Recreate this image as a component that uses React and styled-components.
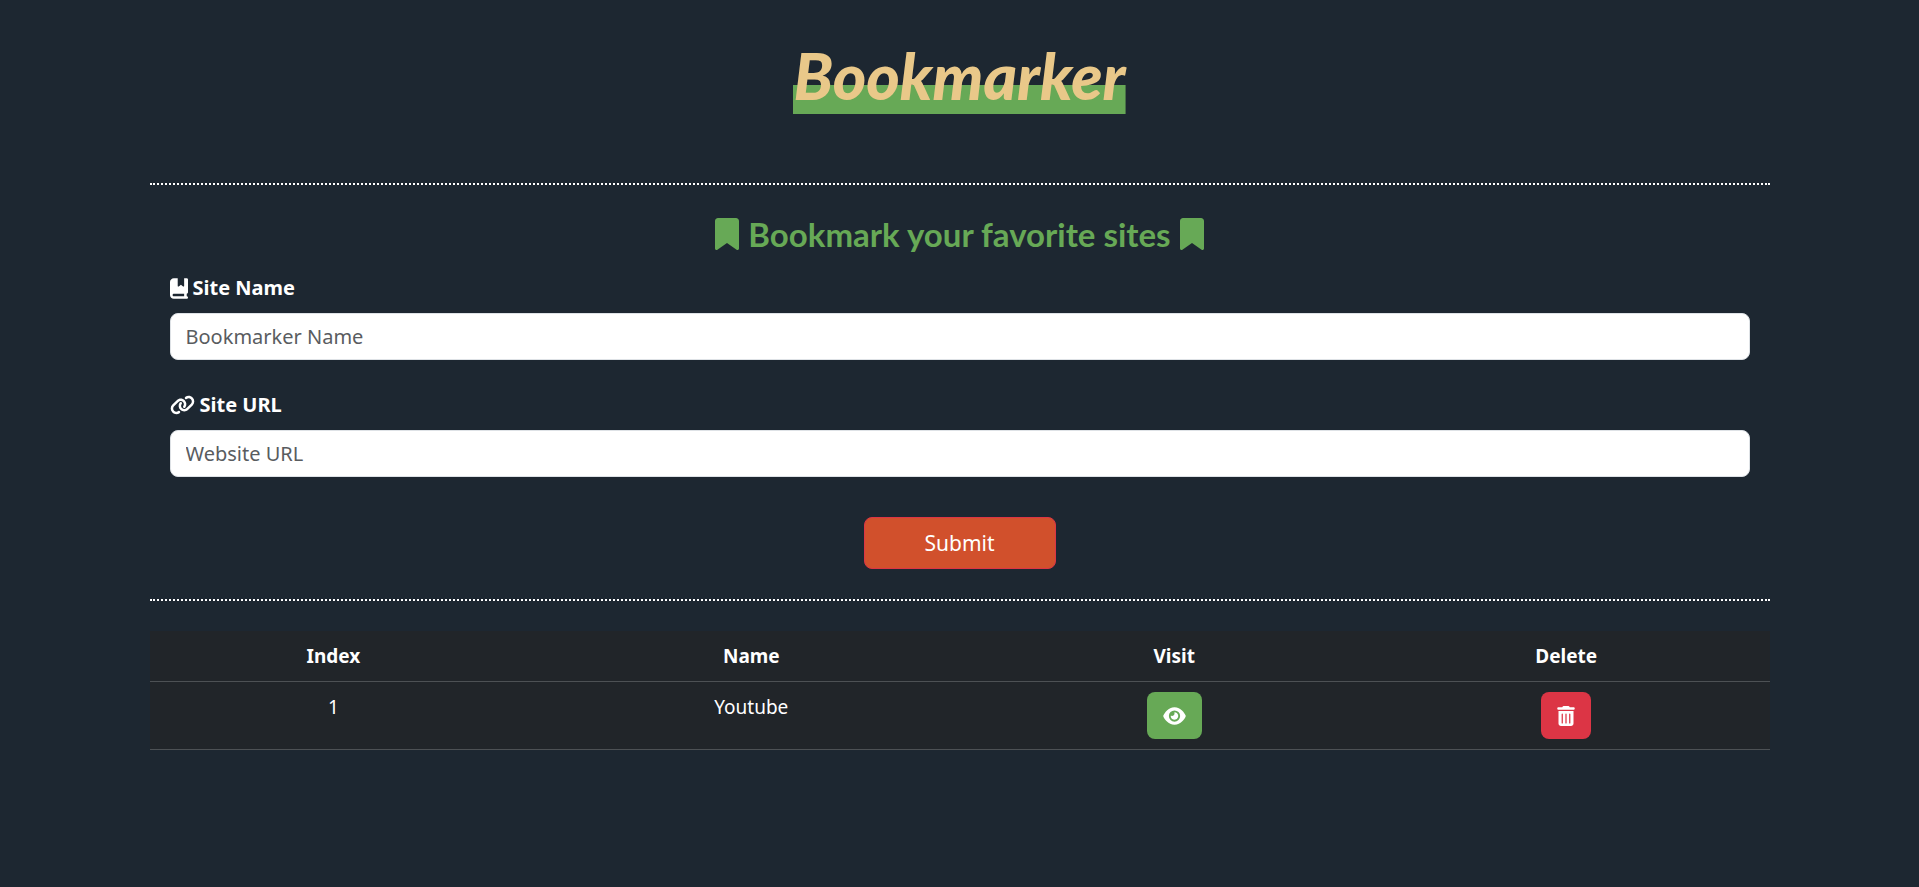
import React, { useState } from "react";
import styled, { createGlobalStyle } from "styled-components";
import { FaBookmark, FaBookBookmark, FaLink, FaEye, FaTrashCan } from "react-icons/fa6";

const GlobalStyle = createGlobalStyle`
  *, *::before, *::after { box-sizing: border-box; }
  body {
    margin: 0;
    background: #1d2731;
    color: #fff;
    font-family: "Noto Sans", "Open Sans", sans-serif;
    font-size: 20px;
    line-height: 30px;
  }
  svg { flex: none; }
`;

const BookmarkIcon = styled(FaBookmark)`
  width: 24px;
  height: 32px;
`;

const BookIcon = styled(FaBookBookmark)`
  width: 18px;
  height: 21px;
`;

const LinkIcon = styled(FaLink)`
  width: 25px;
  height: 20px;
`;

const EyeIcon = styled(FaEye)`
  width: 23px;
  height: 20px;
`;

const TrashIcon = styled(FaTrashCan)`
  width: 18px;
  height: 20px;
`;

const Page = styled.main`
  width: 100%;
  max-width: 1650px;
  margin: 0 auto;
  padding: 0 15px 40px;
`;

const Header = styled.header`
  display: flex;
  justify-content: center;
  padding: 30px 0 69px;
`;

const Title = styled.h1`
  margin: 0;
  padding-top: 8px;
  color: #e9c889;
  font-family: Lato, sans-serif;
  font-size: 64px;
  font-style: italic;
  font-weight: 900;
  line-height: 76px;
  background: linear-gradient(#67a956, #67a956) bottom / 100% 29px no-repeat;
`;

const Form = styled.form`
  display: flex;
  flex-direction: column;
  padding: 30px 20px;
  border-top: 2px dotted #fff;
  border-bottom: 2px dotted #fff;
`;

const Subtitle = styled.h2`
  display: flex;
  align-items: center;
  justify-content: center;
  gap: 9px;
  margin: 0 0 20px;
  color: #67a956;
  font-family: Lato, sans-serif;
  font-size: 33px;
  font-weight: 700;
  line-height: 38px;
`;

const Field = styled.div`
  display: flex;
  flex-direction: column;
  gap: 10px;
  margin-bottom: ${({ $last }) => ($last ? "40px" : "30px")};
`;

const Label = styled.label`
  display: flex;
  align-items: center;
  gap: 5px;
  font-weight: 700;
`;

const Input = styled.input`
  width: 100%;
  height: 47px;
  padding: 0 15px;
  border: 1px solid #dee2e6;
  border-radius: 8px;
  background: #fff;
  color: #212529;
  font: inherit;
  &::placeholder { color: #595c5f; opacity: 1; }
`;

const Submit = styled.button`
  align-self: center;
  width: 192px;
  height: 52px;
  border: 1px solid #dc3545;
  border-radius: 8px;
  background: #d1502c;
  color: #fff;
  font: inherit;
  font-size: 21px;
  cursor: pointer;
`;

const Table = styled.table`
  width: 100%;
  margin-top: 30px;
  border-spacing: 0;
  table-layout: fixed;
  background: #212529;
  font-size: 19px;
  text-align: center;
`;

const Cell = styled.td`
  width: ${({ $width }) => $width || "auto"};
  padding: 10px;
  border-bottom: 1px solid #4d5154;
  vertical-align: top;
  font-weight: ${({ as }) => (as === "th" ? 700 : 400)};
`;

const IconButton = styled.button`
  display: inline-flex;
  align-items: center;
  justify-content: center;
  height: 47px;
  padding: 0 16px;
  border: 0;
  border-radius: 8px;
  background: ${({ $color }) => $color};
  color: #fff;
  vertical-align: top;
  cursor: pointer;
`;

const columns = [
  { label: "Index", width: "22.7%" },
  { label: "Name", width: "28.9%" },
  { label: "Visit", width: "23.3%" },
  { label: "Delete", width: "25.1%" },
];

export default function App() {
  const [sites, setSites] = useState([{ name: "Youtube", url: "https://www.youtube.com" }]);
  const [name, setName] = useState("");
  const [url, setUrl] = useState("");

  const addSite = (event) => {
    event.preventDefault();
    if (!name || !url) return;
    setSites([...sites, { name, url }]);
    setName("");
    setUrl("");
  };

  return (
    <>
      <GlobalStyle />
      <Page>
        <Header>
          <Title>Bookmarker</Title>
        </Header>
        <Form onSubmit={addSite}>
          <Subtitle>
            <BookmarkIcon />
            Bookmark your favorite sites
            <BookmarkIcon />
          </Subtitle>
          <Field>
            <Label htmlFor="site-name">
              <BookIcon />
              Site Name
            </Label>
            <Input
              id="site-name"
              placeholder="Bookmarker Name"
              value={name}
              onChange={(e) => setName(e.target.value)}
            />
          </Field>
          <Field $last>
            <Label htmlFor="site-url">
              <LinkIcon />
              Site URL
            </Label>
            <Input
              id="site-url"
              placeholder="Website URL"
              value={url}
              onChange={(e) => setUrl(e.target.value)}
            />
          </Field>
          <Submit type="submit">Submit</Submit>
        </Form>
        <Table>
          <thead>
            <tr>
              {columns.map(({ label, width }) => (
                <Cell as="th" scope="col" key={label} $width={width}>
                  {label}
                </Cell>
              ))}
            </tr>
          </thead>
          <tbody>
            {sites.map((site, i) => (
              <tr key={i}>
                <Cell>{i + 1}</Cell>
                <Cell>{site.name}</Cell>
                <Cell>
                  <IconButton
                    type="button"
                    $color="#67a956"
                    aria-label={`Visit ${site.name}`}
                    onClick={() => window.open(site.url)}
                  >
                    <EyeIcon />
                  </IconButton>
                </Cell>
                <Cell>
                  <IconButton
                    type="button"
                    $color="#dc3545"
                    aria-label={`Delete ${site.name}`}
                    onClick={() => setSites(sites.filter((_, n) => n !== i))}
                  >
                    <TrashIcon />
                  </IconButton>
                </Cell>
              </tr>
            ))}
          </tbody>
        </Table>
      </Page>
    </>
  );
}
